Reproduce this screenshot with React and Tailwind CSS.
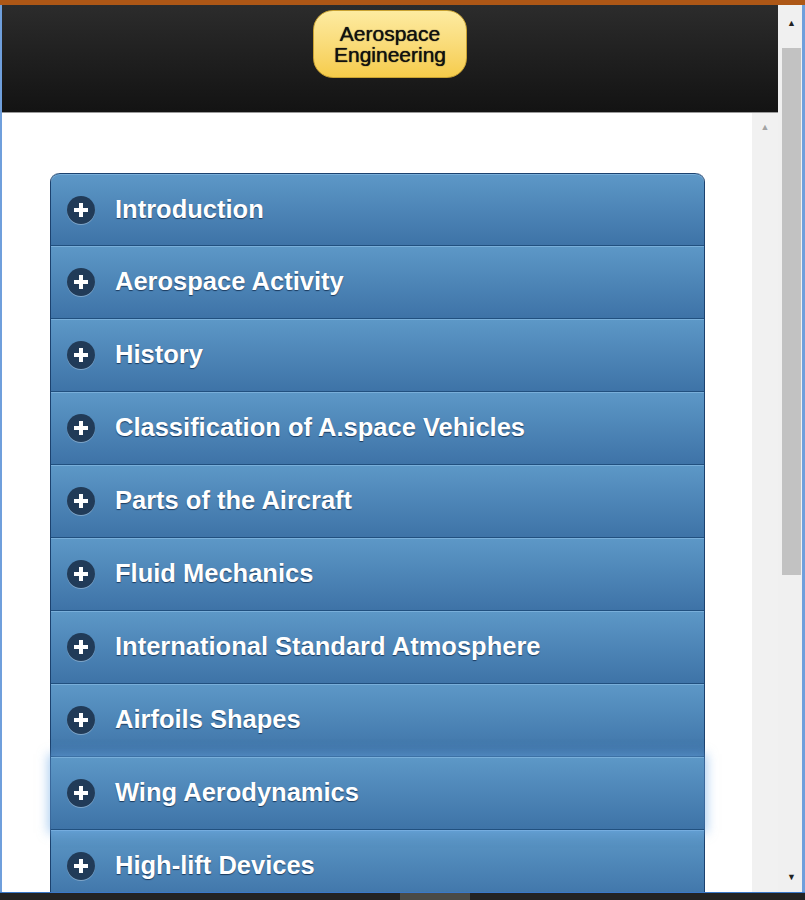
const topics = [
  'Introduction',
  'Aerospace Activity',
  'History',
  'Classification of A.space Vehicles',
  'Parts of the Aircraft',
  'Fluid Mechanics',
  'International Standard Atmosphere',
  'Airfoils Shapes',
  'Wing Aerodynamics',
  'High-lift Devices',
]

function PlusIcon() {
  return (
    <span className="flex h-[28px] w-[28px] shrink-0 items-center justify-center rounded-full bg-[#213b58] shadow-[0_1px_0_rgba(255,255,255,0.3)]">
      <svg width="18" height="18" viewBox="0 0 18 18">
        <path d="M9 2v14M2 9h14" stroke="#fff" strokeWidth="4" strokeLinecap="butt" />
      </svg>
    </span>
  )
}

function Row({ title, first, focused }) {
  const shadow = focused
    ? 'relative z-10 shadow-[0_0_10px_3px_rgba(110,170,230,0.55),inset_0_1px_0_rgba(140,190,230,0.6)]'
    : 'shadow-[inset_0_1px_0_rgba(140,190,230,0.6)]'
  return (
    <div
      className={`flex h-[73px] items-center border-b border-[#21507f] bg-gradient-to-b from-[#5d98c7] to-[#3e73a7] ${shadow} ${first ? 'rounded-t-[9px] border-t border-t-[#1c426f]' : ''}`}
    >
      <div className="ml-[16px]">
        <PlusIcon />
      </div>
      <span className="ml-[20px] text-[25.5px] font-bold leading-none text-white [text-shadow:0_1px_1px_#1b3a5e]">
        {title}
      </span>
    </div>
  )
}

export default function App() {
  return (
    <div className="flex h-[900px] w-[805px] flex-col overflow-hidden bg-white font-['Liberation_Sans',Arial,sans-serif]">
      <div className="h-[5px] shrink-0 bg-[#ad5716]" />
      <div className="flex min-h-0 flex-1">
        <div className="w-[2px] shrink-0 bg-[#6f9fdc]" />
        <div className="flex w-[776px] shrink-0 flex-col">
          <div className="flex h-[108px] shrink-0 justify-center border-b border-[#9a9a9a] bg-gradient-to-b from-[#2c2c2c] to-[#131313] pt-[5px]">
            <div className="flex h-[68px] w-[154px] flex-col items-center justify-center rounded-[20px] border border-[#c9a232] bg-gradient-to-b from-[#fdeba0] to-[#f6cc4a] text-center text-[21px] leading-[21px] text-[#111] [text-shadow:0_0_1px_#000]">
              <span>Aerospace</span>
              <span>Engineering</span>
            </div>
          </div>
          <div className="flex min-h-0 flex-1">
            <div className="w-[750px] shrink-0 overflow-hidden pl-[48px] pr-[47px] pt-[60px]">
              <div className="rounded-t-[9px] border-x border-[#1c426f]">
                {topics.map((t, i) => (
                  <Row key={t} title={t} first={i === 0} focused={t === 'Wing Aerodynamics'} />
                ))}
              </div>
            </div>
            <div className="flex w-[26px] shrink-0 justify-center bg-[#f1f1f1] pt-[10px]">
              <span className="text-[9px] leading-none text-[#a3a3a3]">▲</span>
            </div>
          </div>
        </div>
        <div className="flex w-[24px] shrink-0 flex-col items-center bg-[#f0f0f0] pl-[3px]">
          <span className="mt-[14px] text-[9px] leading-none text-[#222]">▲</span>
          <div className="mt-[20px] h-[527px] w-[19px] bg-[#c2c2c2]" />
          <div className="flex-1" />
          <span className="mb-[10px] text-[9px] leading-none text-[#222]">▼</span>
        </div>
        <div className="w-[3px] shrink-0 bg-[#6f9fdc]" />
      </div>
      <div className="h-px shrink-0 bg-[#3a78c8]" />
      <div className="flex h-[7px] shrink-0 bg-[#232323]">
        <div className="ml-[400px] w-[70px] bg-[#4a4a46]" />
      </div>
    </div>
  )
}
